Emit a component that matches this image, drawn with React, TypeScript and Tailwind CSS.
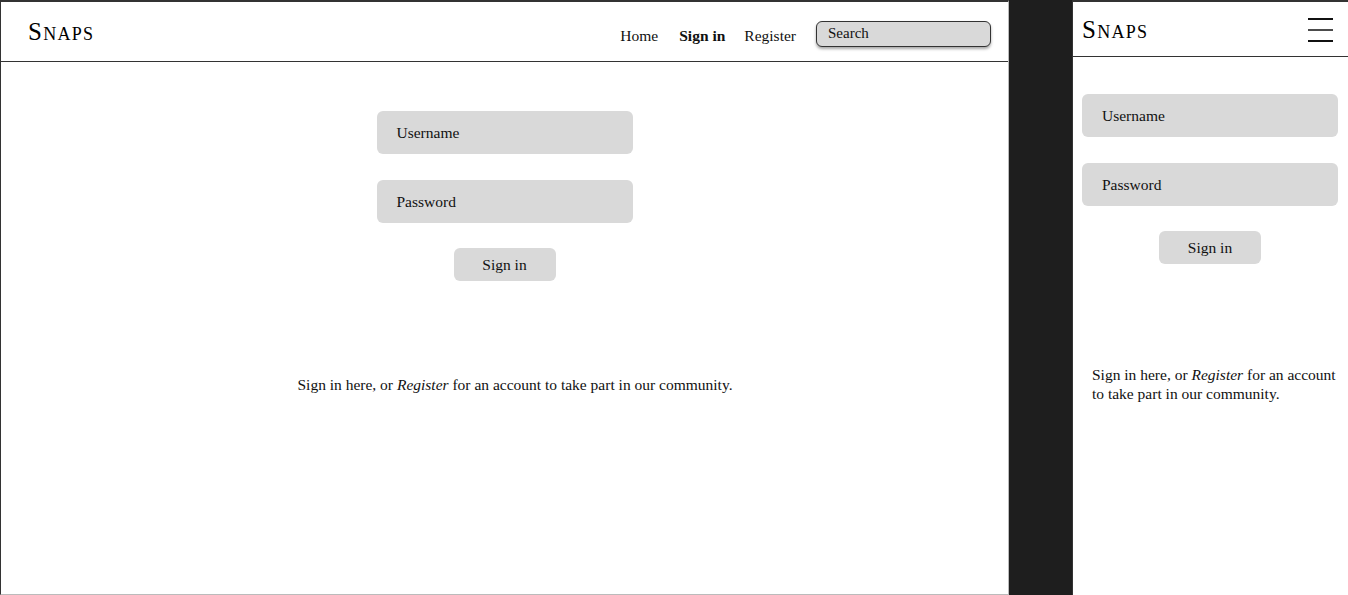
const serif = { fontFamily: '"Liberation Serif", "DejaVu Serif", serif' };

function Logo() {
  return (
    <span className="text-[25px] leading-none tracking-[0.05em] text-black [font-variant:small-caps]">
      Snaps
    </span>
  );
}

function SignInForm({ compact }: { compact?: boolean }) {
  return (
    <div className={compact ? 'flex flex-col' : 'flex flex-col items-center'}>
      <div className="flex w-[256px] flex-col gap-[26px]">
        <div className="flex h-[43px] items-center rounded-[6px] bg-[#d9d9d9] px-5 text-[15.5px] text-[#111]">Username</div>
        <div className="flex h-[43px] items-center rounded-[6px] bg-[#d9d9d9] px-5 text-[15.5px] text-[#111]">Password</div>
      </div>
      <div className="flex w-[256px] justify-center pt-[25px]">
        <button className="h-[33px] w-[102px] rounded-[6px] bg-[#d9d9d9] text-[15.5px] text-[#111]">Sign in</button>
      </div>
    </div>
  );
}

function Blurb() {
  return (
    <>
      Sign in here, or <em>Register</em> for an account to take part in our community.
    </>
  );
}

export default function App() {
  return (
    <div className="flex h-[595px] w-[1348px] bg-[#1e1e1e]" style={serif}>
      {/* desktop frame */}
      <div className="flex w-[1009px] flex-col border-t-2 border-r border-b border-l border-t-[#333] border-r-[#bbb] border-b-[#bbb] border-l-[#333] bg-white">
        <header className="flex h-[60px] items-center border-b-[1.5px] border-[#333] pl-[27px] pr-[17px]">
          <Logo />
          <nav className="ml-auto mt-[4px] flex items-center text-[15.5px] text-[#111]">
            <a className="mt-[4px]">Home</a>
            <a className="mt-[4px] ml-[21px] font-bold">Sign in</a>
            <a className="mt-[4px] ml-[19px]">Register</a>
            <div className="ml-[20px] flex h-[26px] w-[175px] items-center rounded-[6px] border border-[#333] bg-[#d9d9d9] pl-[11px] text-[15px] text-[#111] shadow-[0_2px_3px_rgba(0,0,0,0.35)]">
              Search
            </div>
          </nav>
        </header>
        <main className="flex flex-col items-center pt-[49px]">
          <SignInForm />
          <p className="mt-[92px] ml-[21px] text-[15.5px] text-[#111]">
            <Blurb />
          </p>
        </main>
      </div>

      <div className="w-[63px]" />

      {/* mobile frame */}
      <div className="flex flex-1 flex-col border-t-2 border-l border-t-[#333] border-l-[#333] bg-white">
        <header className="flex h-[55px] items-center justify-between border-b-[1.5px] border-[#333] pl-[9px] pr-[15px]">
          <Logo />
          <svg width="25" height="24" viewBox="0 0 25 24" className="mt-[2px]">
            <line x1="0" y1="1" x2="25" y2="1" stroke="#111" strokeWidth="2" />
            <line x1="0" y1="12" x2="25" y2="12" stroke="#111" strokeWidth="1.5" />
            <line x1="0" y1="23" x2="25" y2="23" stroke="#111" strokeWidth="2" />
          </svg>
        </header>
        <main className="flex flex-col pl-[9px] pt-[37px]">
          <SignInForm compact />
          <p className="mt-[101px] w-[262px] pl-[10px] text-[15.5px] leading-[19px] text-[#111]">
            <Blurb />
          </p>
        </main>
      </div>
    </div>
  );
}
